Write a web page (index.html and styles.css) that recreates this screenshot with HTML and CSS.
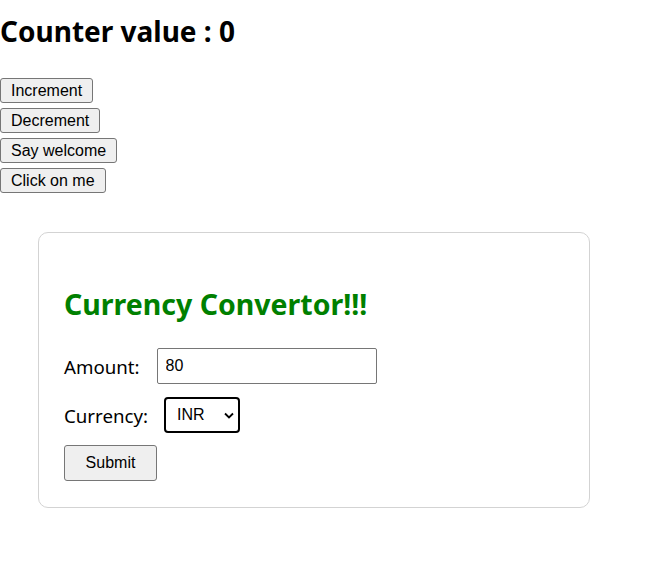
FILE: index.html
```html
<!DOCTYPE html>
<html>
<head>
<meta charset="utf-8">
<link rel="stylesheet" href="styles.css">
</head>
<body>
<div class="counter">
  <h1 class="title">Counter value : 0</h1>
  <div class="btns">
    <button class="btn">Increment</button>
    <button class="btn">Decrement</button>
    <button class="btn">Say welcome</button>
    <button class="btn">Click on me</button>
  </div>
</div>
<div class="card">
  <h2 class="card-title">Currency Convertor!!!</h2>
  <div class="row row-first">
    <label class="lbl">Amount:</label>
    <input class="inp" type="text" value="80">
  </div>
  <div class="row row-sel">
    <label class="lbl">Currency:</label>
    <div class="sel">
      <span class="sel-text">INR</span>
      <svg class="chev" width="10" height="7" viewBox="0 0 10 7"><path d="M1 1.5 L5 5.5 L9 1.5" fill="none" stroke="#000" stroke-width="1.8"/></svg>
    </div>
  </div>
  <button class="submit">Submit</button>
</div>
</body>
</html>
```
FILE: styles.css
```css
html, body { margin: 0; padding: 0; background: #fff; }
body { font-family: "Noto Sans", "Open Sans", sans-serif; color: #000; }
.title { margin: 14px 0 30px; font-size: 28px; font-weight: 700; line-height: 34px; }
.btns { display: flex; flex-direction: column; align-items: flex-start; gap: 5px; }
.btn {
  font-family: "Liberation Sans", Arial, sans-serif; font-size: 16px; color: #000;
  background: #efefef; border: 1px solid #767676; border-radius: 3px;
  padding: 2px 10px; height: 25px; line-height: 19px; margin: 0;
}
.card {
  margin: 39px 0 0 38px; width: 500px; padding: 52px 25px 26px;
  border: 1px solid #d3d3d3; border-radius: 10px;
}
.card-title { margin: 0 0 25px; font-size: 28.5px; color: #008000; font-weight: 700; line-height: 38px; }
.row { display: flex; align-items: center; gap: 17px; margin-bottom: 12px; }
.row-first { margin-bottom: 13px; }
.row-sel { gap: 16px; }
.lbl { font-size: 18.7px; }
.inp {
  font-family: "Liberation Sans", Arial, sans-serif; font-size: 16px;
  width: 220px; height: 36px; box-sizing: border-box; margin: 0;
  border: 1px solid #767676; border-radius: 2px; padding: 0 8px;
}
.sel {
  width: 76px; height: 36px; box-sizing: border-box; border: 2px solid #000; border-radius: 4px;
  display: flex; align-items: center; justify-content: space-between; padding: 0 4px 0 11px;
  font-family: "Liberation Sans", Arial, sans-serif; font-size: 16px;
}
.submit {
  font-family: "Liberation Sans", Arial, sans-serif; font-size: 16px; color: #000;
  width: 93px; height: 36px; background: #efefef; border: 1px solid #767676; border-radius: 3px; margin: 0;
}
```
